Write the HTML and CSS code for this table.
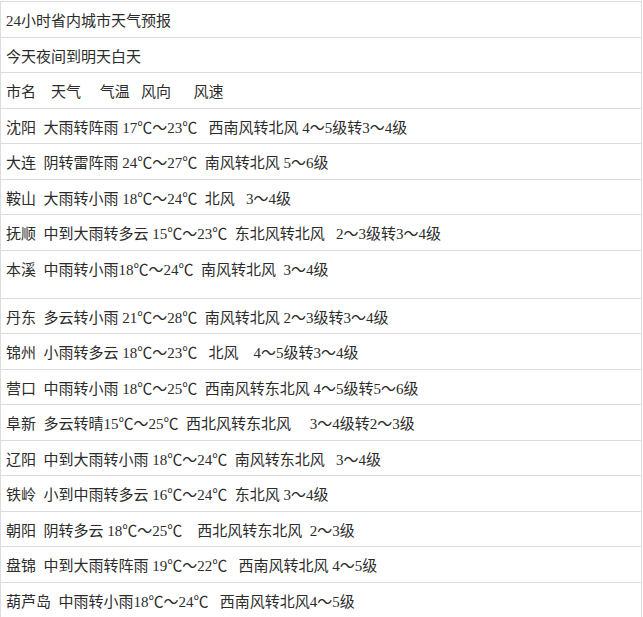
FILE: index.html
```html
<!DOCTYPE html>
<html lang="zh-CN">
<head>
<meta charset="utf-8">
<title>24小时省内城市天气预报</title>
<link rel="stylesheet" href="styles.css">
</head>
<body>
<div class="forecast">
<div class="row">24小时省内城市天气预报</div>
<div class="row">今天夜间到明天白天</div>
<div class="row">市名    天气     气温   风向      风速</div>
<div class="row">沈阳  大雨转阵雨 17℃～23℃   西南风转北风 4～5级转3～4级</div>
<div class="row">大连  阴转雷阵雨 24℃～27℃  南风转北风 5～6级</div>
<div class="row">鞍山  大雨转小雨 18℃～24℃  北风   3～4级</div>
<div class="row">抚顺  中到大雨转多云 15℃～23℃  东北风转北风   2～3级转3～4级</div>
<div class="row row-tall">本溪  中雨转小雨18℃～24℃  南风转北风  3～4级</div>
<div class="row">丹东  多云转小雨 21℃～28℃  南风转北风 2～3级转3～4级</div>
<div class="row">锦州  小雨转多云 18℃～23℃   北风    4～5级转3～4级</div>
<div class="row">营口  中雨转小雨 18℃～25℃  西南风转东北风 4～5级转5～6级</div>
<div class="row">阜新  多云转晴15℃～25℃  西北风转东北风     3～4级转2～3级</div>
<div class="row">辽阳  中到大雨转小雨 18℃～24℃  南风转东北风   3～4级</div>
<div class="row">铁岭  小到中雨转多云 16℃～24℃  东北风 3～4级</div>
<div class="row">朝阳  阴转多云 18℃～25℃    西北风转东北风  2～3级</div>
<div class="row">盘锦  中到大雨转阵雨 19℃～22℃   西南风转北风 4～5级</div>
<div class="row">葫芦岛  中雨转小雨18℃～24℃   西南风转北风4～5级</div>
</div>
</body>
</html>
```

FILE: styles.css
```css
html, body {
  margin: 0;
  padding: 0;
  background: #ffffff;
}

body {
  padding-top: 1px;
}

.forecast {
  width: 642px;
  box-sizing: border-box;
  border: 1px solid #dcdcdc;
  font-family: "Liberation Serif", "Noto Sans CJK SC", serif;
  font-size: 15px;
  color: #2b2b2b;
}

.row {
  box-sizing: border-box;
  height: 35.5px;
  padding: 9px 5px 0;
  line-height: 20px;
  white-space: pre;
  border-bottom: 1px solid #dcdcdc;
  overflow: hidden;
}

.row-tall {
  height: 48px;
}
```
